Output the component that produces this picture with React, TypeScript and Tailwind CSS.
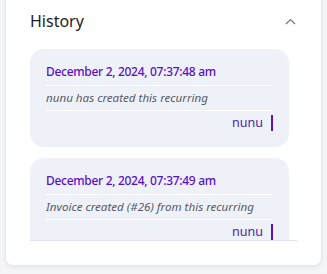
const ENTRIES = [
  { date: 'December 2, 2024, 07:37:48 am', text: 'nunu has created this recurring', user: 'nunu' },
  { date: 'December 2, 2024, 07:37:49 am', text: 'Invoice created (#26) from this recurring', user: 'nunu' },
]

function HistoryItem({ date, text, user }: { date: string; text: string; user: string }) {
  return (
    <div className="rounded-[14px] bg-[#eff1f8] px-4 pt-[14px] pb-[16px]">
      <div className="border-b border-white pb-[4px] text-[12px] font-medium leading-[18px] tracking-[-0.3px] text-[#5a0fc8]">
        {date}
      </div>
      <div className="border-b border-white py-[4px] text-[11.6px] italic leading-[16px] text-[#575b67]">
        {text}
      </div>
      <div className="flex justify-end pt-[4px]">
        <span className="border-r-2 border-[#5a0fc8] pr-2 text-[12.5px] font-normal leading-[16px] text-[#4b1fa8]">
          {user}
        </span>
      </div>
    </div>
  )
}

export default function App() {
  return (
    <div className="flex h-[274px] w-[327px] flex-col overflow-hidden bg-[#f4f5f9] px-[5px] pb-[8px] font-['Noto_Sans',sans-serif]">
      <div className="-mt-4 h-[282px] rounded-lg border border-[#e6e8ef] bg-white pt-4 pl-6 pr-6 shadow-[0_2px_4px_rgba(0,0,0,0.06)]">
        <div className="flex h-[40px] items-center justify-between">
          <h3 className="text-[16px] font-normal text-[#1f2027]">History</h3>
          <svg width="11" height="7" viewBox="0 0 11 7" className="mr-[1px]" fill="none">
            <path d="M1 6 L5.5 1.5 L10 6" stroke="#6b7290" strokeWidth="1.2" />
          </svg>
        </div>
        <div className="mt-2 h-[192px] overflow-hidden border-b border-[#dde3f0] pr-2">
          <div className="flex flex-col gap-[11px]">
            {ENTRIES.map((e, i) => (
              <HistoryItem key={i} {...e} />
            ))}
          </div>
        </div>
      </div>
    </div>
  )
}
